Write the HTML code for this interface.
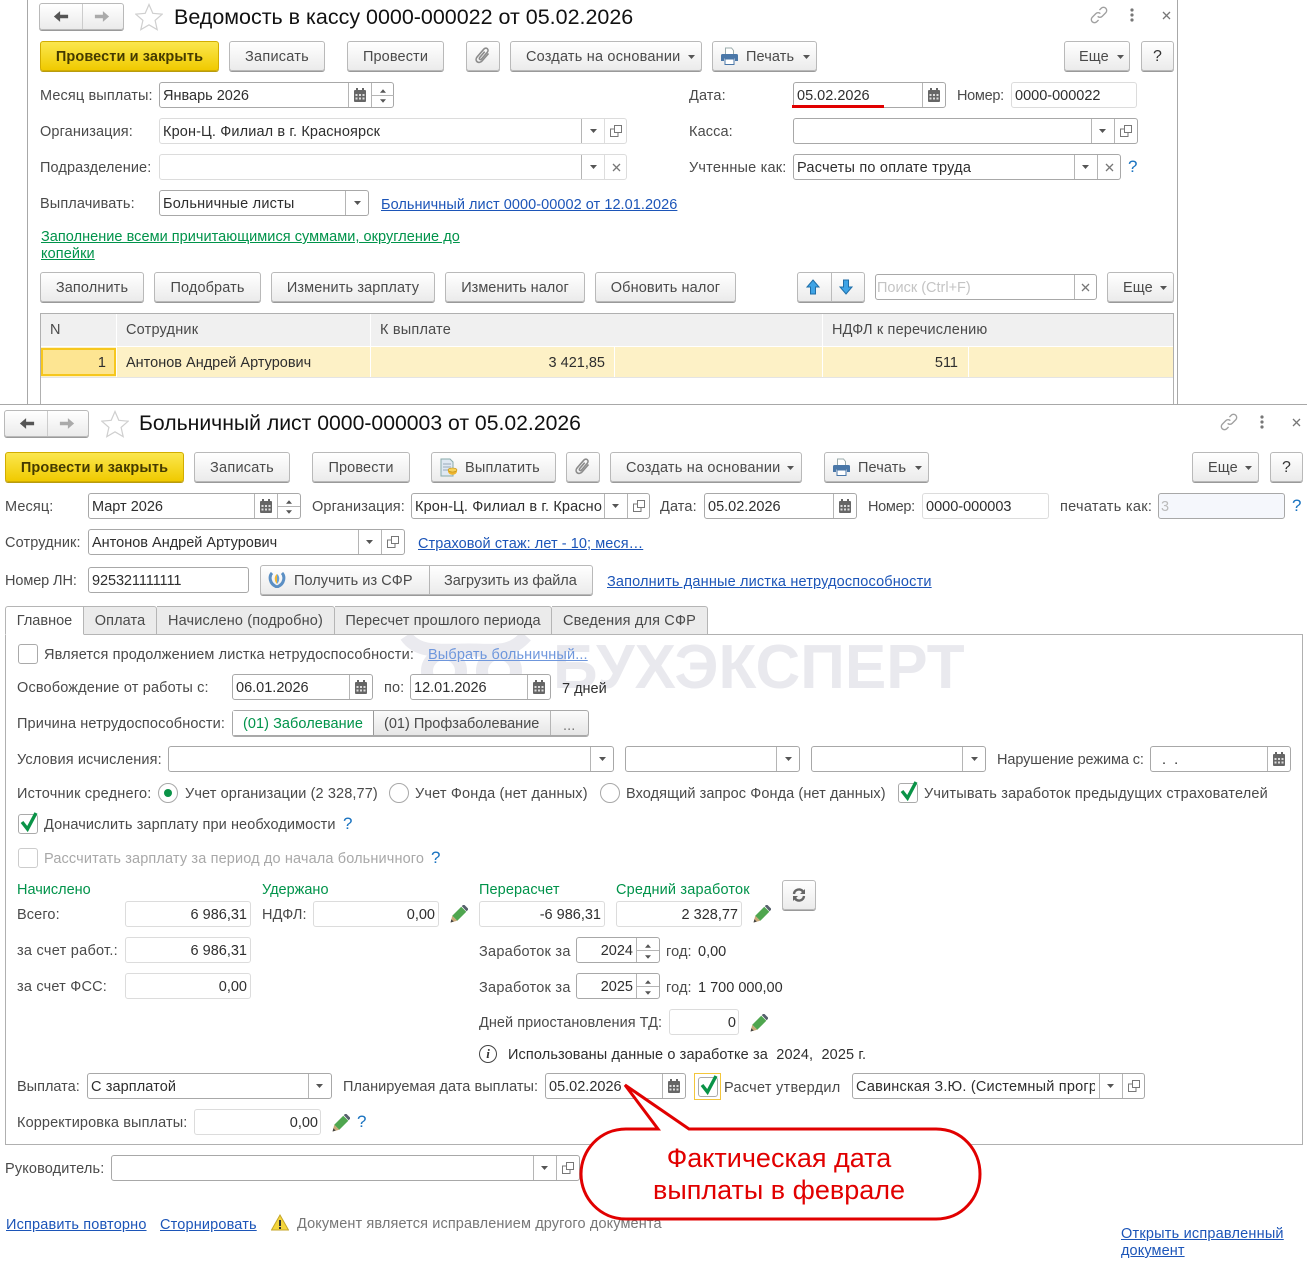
<!DOCTYPE html>
<html lang="ru"><head><meta charset="utf-8"><title>Больничный лист</title>
<style>
html,body{margin:0;padding:0;background:#fff}
#p{position:relative;width:1307px;height:1265px;overflow:hidden;background:#fff;font:14.5px/20px "Liberation Sans",Arial,sans-serif;color:#3c3c3c}
#p div,#p svg,#p a{position:absolute;box-sizing:border-box}
.t{white-space:nowrap;color:#4a4a4a;height:20px;margin-top:1px;letter-spacing:.12px}
.v{white-space:nowrap;color:#2e2e2e;height:20px;overflow:hidden;margin-top:1px}
.g{white-space:nowrap;color:#00934a;height:20px;margin-top:1px}
a.l{white-space:nowrap;color:#1c55b8;text-decoration:underline;height:20px;margin-top:1px;letter-spacing:.1px}
.b{border:1px solid #b9b9b9;border-radius:3px;background:linear-gradient(#fff,#ebebeb);box-shadow:0 1px 0 #9a9a9a;text-align:center;color:#4a4a4a;line-height:30px;white-space:nowrap;letter-spacing:.12px}
.y{border:1px solid #d2ad00;border-radius:3px;background:linear-gradient(#fbe74e,#f0ca00);box-shadow:0 1px 0 #b89c10;text-align:center;color:#443a00;font-weight:bold;line-height:30px;white-space:nowrap;letter-spacing:.1px}
.f{border:1px solid #a8a8a8;border-radius:3px;background:#fff;height:26px}
.e{border:1px solid #dcdcdc;border-radius:3px;background:#fff;height:26px}
.s{width:1px;background:#b5b5b5}
.c{border:1px solid #aaa;border-radius:3px;background:#fff;width:20px;height:20px}
.h{color:#1a73c0;font-size:17px;white-space:nowrap;height:20px;margin-top:1px}
.r{border:1px solid #a8a8a8;border-radius:50%;background:#fff;width:20px;height:20px}
.tab{height:29px;border:1px solid #b5b5b5;border-left:0;border-radius:0 3px 0 0;background:#ebebeb;text-align:center;line-height:29px;color:#4a4a4a;white-space:nowrap}
</style></head><body><div id="p">
<svg width="0" height="0" style="left:0;top:0"><defs>
<symbol id="cal" viewBox="0 0 12 14"><path d="M2 0h2v2h4V0h2v2h1a1 1 0 0 1 1 1v10a1 1 0 0 1-1 1H1a1 1 0 0 1-1-1V3a1 1 0 0 1 1-1h1z" fill="#666"/><path d="M1.5 6h2v2h-2zM5 6h2v2H5zM8.500 6h2v2h-2zM1.500 9.500h2v2h-2zM5 9.500h2v2H5zM8.500 9.500h2v2h-2z" fill="#ddd"/></symbol>
<symbol id="dd" viewBox="0 0 7 4"><path d="M0 0h7L3.500 4z" fill="#555"/></symbol>
<symbol id="up" viewBox="0 0 7 4"><path d="M0 4h7L3.500 0z" fill="#555"/></symbol>
<symbol id="cp" viewBox="0 0 12 12"><path d="M4.500.5h7v7h-7z" fill="none" stroke="#777"/><path d="M4 4H.5v7.500H8V8" fill="none" stroke="#777"/></symbol>
<symbol id="x" viewBox="0 0 9 9"><path d="M1 1l7 7M8 1l-7 7" stroke="#777" stroke-width="1.300" fill="none"/></symbol>
<symbol id="pen" viewBox="0 0 16 16"><path d="M.5 15.500l1.500-6 4.500 4.500z" fill="#c8a878"/><path d="M2 9.500L10 1.500l4.500 4.500-8 8z" fill="#4fa64f"/><path d="M10.500 1l1-1a1 1 0 0 1 1.400 0l3 3a1 1 0 0 1 0 1.400l-1.200 1.100z" fill="#56606c"/><path d="M.5 15.500l.7-2.800 2.100 2.100z" fill="#444"/></symbol>
<symbol id="clip" viewBox="0 0 16 18"><path d="M13.500 6.500L7 14c-1.500 1.700-3.700 1.800-5 .6S.8 11.400 2.300 9.700l6.500-7.500c1-1.200 2.600-1.300 3.500-.5s1 2.300 0 3.500L6.500 12c-.5.600-1.300.7-1.800.3s-.5-1.200 0-1.800l5-5.800" fill="none" stroke="#8c8c8c" stroke-width="1.600"/></symbol>
<symbol id="prn" viewBox="0 0 17 18"><path d="M4.500 1h6l2 2.500V8h-8z" fill="#fff" stroke="#9aa" stroke-width="1"/><path d="M1.500 7h14a1.500 1.500 0 0 1 1.500 1.500V14h-3v-2.500H3V14H0V8.500A1.500 1.500 0 0 1 1.500 7z" fill="#4a77a8"/><path d="M4 12h9v5.500H4z" fill="#fff" stroke="#4a77a8"/></symbol>
<symbol id="star" viewBox="0 0 28 28"><path d="M14 1.500l3.800 8.800 9.400.9-7.100 6.200 2.100 9.300-8.200-4.900-8.200 4.900 2.100-9.300L.8 11.200l9.400-.9z" fill="#fff" stroke="#cfcfcf" stroke-width="1.200"/></symbol>
<symbol id="al" viewBox="0 0 18 14"><path d="M1 7L8 1v4h9v4H8v4z" fill="#555"/></symbol>
<symbol id="ar" viewBox="0 0 18 14"><path d="M17 7l-7-6v4H1v4h9v4z" fill="#aaa"/></symbol>
<symbol id="link" viewBox="0 0 20 20"><path d="M8.500 11.500a3.500 3.500 0 0 0 5 0l4-4a3.500 3.500 0 0 0-5-5l-2 2M11.500 8.500a3.500 3.500 0 0 0-5 0l-4 4a3.500 3.500 0 0 0 5 5l2-2" fill="none" stroke="#a0a0a0" stroke-width="1.500"/></symbol>
<symbol id="dots" viewBox="0 0 4 14"><circle cx="2" cy="2" r="1.600" fill="#777"/><circle cx="2" cy="7" r="1.600" fill="#777"/><circle cx="2" cy="12" r="1.600" fill="#777"/></symbol>
<symbol id="bu" viewBox="0 0 16 16"><path d="M8 1l6 7H10.500v7h-5V8H2z" fill="#3fa4e6" stroke="#1f6ea8"/></symbol>
<symbol id="bd" viewBox="0 0 16 16"><path d="M8 15l6-7H10.500V1h-5v7H2z" fill="#3fa4e6" stroke="#1f6ea8"/></symbol>
<symbol id="chk" viewBox="0 0 20 22"><path d="M3 11l5.500 7L17 2" fill="none" stroke="#0a9347" stroke-width="3.400"/></symbol>
</defs></svg>

<!-- top window -->
<div style="left:27px;top:0;width:1px;height:405px;background:#a8a8a8"></div>
<div style="left:1177px;top:0;width:1px;height:405px;background:#a8a8a8"></div>
<div class="b" style="left:39px;top:3px;width:85px;height:27px"></div><div class="s" style="left:82px;top:4px;height:25px;background:#ccc"></div>
<svg style="left:53px;top:10px" width="16" height="13"><use href="#al"/></svg><svg style="left:94px;top:10px" width="16" height="13"><use href="#ar"/></svg>
<svg style="left:135px;top:3px" width="28" height="28"><use href="#star"/></svg>
<div class="v" style="left:174px;top:1px;font-size:21.47px;line-height:30px;height:30px;color:#111">Ведомость в кассу 0000-000022 от 05.02.2026</div>
<svg style="left:1090px;top:6px" width="18" height="18"><use href="#link"/></svg><svg style="left:1130px;top:8px" width="4" height="14"><use href="#dots"/></svg><svg style="left:1162px;top:11px" width="9" height="9"><use href="#x"/></svg>

<div class="y" style="left:40px;top:41px;width:179px;height:30px">Провести и закрыть</div>
<div class="b" style="left:229px;top:41px;width:96px;height:30px;letter-spacing:.25px">Записать</div>
<div class="b" style="left:347px;top:41px;width:97px;height:30px">Провести</div>
<div class="b" style="left:466px;top:41px;width:34px;height:30px"></div><svg style="left:475px;top:47px" width="16" height="18"><use href="#clip"/></svg>
<div class="b" style="left:510px;top:41px;width:192px;height:30px;text-align:left;padding-left:15px;letter-spacing:.2px">Создать на основании</div><svg style="left:688px;top:55px" width="7" height="4"><use href="#dd"/></svg>
<div class="b" style="left:712px;top:41px;width:105px;height:30px;text-align:left;padding-left:33px">Печать</div><svg style="left:721px;top:47px" width="17" height="18"><use href="#prn"/></svg><svg style="left:803px;top:55px" width="7" height="4"><use href="#dd"/></svg>
<div class="b" style="left:1064px;top:41px;width:66px;height:30px;text-align:left;padding-left:14px">Еще</div><svg style="left:1117px;top:55px" width="7" height="4"><use href="#dd"/></svg>
<div class="b" style="left:1141px;top:41px;width:33px;height:30px;font-size:16px;color:#333">?</div>

<div class="t" style="left:40px;top:85px">Месяц выплаты:</div>
<div class="f" style="left:159px;top:82px;width:235px"></div><div class="s" style="left:348px;top:83px;height:24px"></div><div class="s" style="left:371px;top:83px;height:24px"></div><div class="s" style="left:372px;top:95px;height:1px;width:22px"></div>
<div class="v" style="left:163px;top:85px">Январь 2026</div>
<svg style="left:354px;top:88px" width="12" height="14"><use href="#cal"/></svg><svg style="left:380px;top:89px" width="6" height="4"><use href="#up"/></svg><svg style="left:380px;top:99px" width="6" height="4"><use href="#dd"/></svg>

<div class="t" style="left:689px;top:85px">Дата:</div>
<div class="f" style="left:793px;top:82px;width:153px"></div><div class="s" style="left:922px;top:83px;height:24px"></div>
<div class="v" style="left:797px;top:85px">05.02.2026</div><svg style="left:928px;top:88px" width="12" height="14"><use href="#cal"/></svg>
<div style="left:792px;top:105px;width:92px;height:3px;background:#e10000"></div>
<div class="t" style="left:957px;top:85px;letter-spacing:-.3px">Номер:</div>
<div class="e" style="left:1011px;top:82px;width:126px"></div><div class="v" style="left:1015px;top:85px">0000-000022</div>

<div class="t" style="left:40px;top:121px">Организация:</div>
<div class="e" style="left:159px;top:118px;width:468px"></div><div class="s" style="left:581px;top:119px;height:24px"></div><div class="s" style="left:604px;top:119px;height:24px;background:#ddd"></div>
<div class="v" style="left:163px;top:121px;letter-spacing:.13px">Крон-Ц. Филиал в г. Красноярск</div><svg style="left:590px;top:129px" width="7" height="4"><use href="#dd"/></svg><svg style="left:610px;top:125px" width="12" height="12"><use href="#cp"/></svg>
<div class="t" style="left:689px;top:121px">Касса:</div>
<div class="f" style="left:793px;top:118px;width:345px"></div><div class="s" style="left:1091px;top:119px;height:24px"></div><div class="s" style="left:1114px;top:119px;height:24px"></div>
<svg style="left:1099px;top:129px" width="7" height="4"><use href="#dd"/></svg><svg style="left:1120px;top:125px" width="12" height="12"><use href="#cp"/></svg>

<div class="t" style="left:40px;top:157px">Подразделение:</div>
<div class="e" style="left:159px;top:154px;width:468px"></div><div class="s" style="left:581px;top:155px;height:24px"></div><div class="s" style="left:604px;top:155px;height:24px;background:#ddd"></div>
<svg style="left:590px;top:165px" width="7" height="4"><use href="#dd"/></svg><svg style="left:612px;top:163px" width="9" height="9"><use href="#x"/></svg>
<div class="t" style="left:689px;top:157px;letter-spacing:.2px">Учтенные как:</div>
<div class="f" style="left:793px;top:154px;width:328px"></div><div class="s" style="left:1074px;top:155px;height:24px"></div><div class="s" style="left:1097px;top:155px;height:24px"></div>
<div class="v" style="left:797px;top:157px;letter-spacing:.22px">Расчеты по оплате труда</div><svg style="left:1082px;top:165px" width="7" height="4"><use href="#dd"/></svg><svg style="left:1105px;top:163px" width="9" height="9"><use href="#x"/></svg>
<div class="h" style="left:1128px;top:156px">?</div>

<div class="t" style="left:40px;top:193px">Выплачивать:</div>
<div class="f" style="left:159px;top:190px;width:210px"></div><div class="s" style="left:345px;top:191px;height:24px"></div>
<div class="v" style="left:163px;top:193px;letter-spacing:.2px">Больничные листы</div><svg style="left:354px;top:201px" width="7" height="4"><use href="#dd"/></svg>
<a class="l" style="left:381px;top:194px;letter-spacing:.05px">Больничный лист 0000-00002 от 12.01.2026</a>
<a class="l" style="left:41px;top:226px;color:#00934a;letter-spacing:.04px">Заполнение всеми причитающимися суммами, округление до</a>
<a class="l" style="left:41px;top:243px;color:#00934a">копейки</a>

<div class="b" style="left:40px;top:272px;width:104px;height:30px">Заполнить</div>
<div class="b" style="left:154px;top:272px;width:107px;height:30px">Подобрать</div>
<div class="b" style="left:271px;top:272px;width:164px;height:30px">Изменить зарплату</div>
<div class="b" style="left:445px;top:272px;width:140px;height:30px;letter-spacing:0">Изменить налог</div>
<div class="b" style="left:595px;top:272px;width:141px;height:30px">Обновить налог</div>
<div class="b" style="left:797px;top:272px;width:68px;height:30px"></div><div class="s" style="left:831px;top:273px;height:28px;background:#bbb"></div>
<svg style="left:805px;top:279px" width="16" height="16"><use href="#bu"/></svg><svg style="left:838px;top:279px" width="16" height="16"><use href="#bd"/></svg>
<div class="f" style="left:875px;top:274px;width:222px"></div><div class="s" style="left:1074px;top:275px;height:24px"></div>
<div class="v" style="left:877px;top:277px;color:#c4c4c4">Поиск (Ctrl+F)</div><svg style="left:1081px;top:283px" width="9" height="9"><use href="#x"/></svg>
<div class="b" style="left:1107px;top:272px;width:67px;height:30px;text-align:left;padding-left:15px">Еще</div><svg style="left:1160px;top:286px" width="7" height="4"><use href="#dd"/></svg>

<div style="left:40px;top:313px;width:1134px;height:92px;border:1px solid #b0b0b0;border-bottom:0;background:#fff"></div>
<div style="left:41px;top:314px;width:1132px;height:32px;background:#f0f0f0"></div>
<div style="left:41px;top:347px;width:1132px;height:30px;background:#fdf1c6"></div>
<div style="left:41px;top:377px;width:1132px;height:1px;background:#e4e4e4"></div>
<div style="left:116px;top:314px;width:1px;height:63px;background:#fff"></div>
<div style="left:370px;top:314px;width:1px;height:63px;background:#fff"></div>
<div style="left:822px;top:314px;width:1px;height:63px;background:#fff"></div>
<div style="left:614px;top:347px;width:1px;height:30px;background:#fff"></div>
<div style="left:968px;top:347px;width:1px;height:30px;background:#fff"></div>
<div style="left:41px;top:348px;width:75px;height:28px;background:#fde592;border:2px solid #f6c71e"></div>
<div class="t" style="left:50px;top:319px">N</div><div class="t" style="left:126px;top:319px;letter-spacing:.2px">Сотрудник</div><div class="t" style="left:380px;top:319px;letter-spacing:.2px">К выплате</div><div class="t" style="left:832px;top:319px;letter-spacing:.16px">НДФЛ к перечислению</div>
<div class="v" style="right:1201px;top:352px">1</div><div class="v" style="left:126px;top:352px">Антонов Андрей Артурович</div><div class="v" style="right:702px;top:352px">3 421,85</div><div class="v" style="right:349px;top:352px">511</div>

<!-- bottom window -->
<div style="left:0;top:404px;width:1307px;height:861px;background:#fff;border-top:1px solid #a8a8a8"></div>

<!-- watermark -->
<svg style="left:398px;top:628px" width="150" height="72" viewBox="0 0 150 72"><path d="M8 8C20 26 44 22 71 22S112 26 128 8" fill="none" stroke="#eaeaef" stroke-width="13"/><circle cx="46" cy="43" r="17" fill="none" stroke="#eaeaef" stroke-width="12"/><circle cx="101" cy="43" r="17" fill="none" stroke="#eaeaef" stroke-width="12"/></svg>
<div style="left:553px;top:633px;font:bold 62px/70px 'Liberation Sans',Arial,sans-serif;color:#e9e9ee;white-space:nowrap">БУХЭКСПЕРТ</div>

<div class="b" style="left:4px;top:410px;width:85px;height:27px"></div><div class="s" style="left:47px;top:411px;height:25px;background:#ccc"></div>
<svg style="left:19px;top:417px" width="16" height="13"><use href="#al"/></svg><svg style="left:59px;top:417px" width="16" height="13"><use href="#ar"/></svg>
<svg style="left:101px;top:410px" width="28" height="28"><use href="#star"/></svg>
<div class="v" style="left:139px;top:408px;font-size:21.2px;line-height:30px;height:30px;color:#111">Больничный лист 0000-000003 от 05.02.2026</div>
<svg style="left:1220px;top:413px" width="18" height="18"><use href="#link"/></svg><svg style="left:1260px;top:415px" width="4" height="14"><use href="#dots"/></svg><svg style="left:1292px;top:418px" width="9" height="9"><use href="#x"/></svg>

<div class="y" style="left:5px;top:452px;width:179px;height:30px">Провести и закрыть</div>
<div class="b" style="left:194px;top:452px;width:96px;height:30px;letter-spacing:.25px">Записать</div>
<div class="b" style="left:312px;top:452px;width:98px;height:30px">Провести</div>
<div class="b" style="left:431px;top:452px;width:125px;height:30px;text-align:left;padding-left:33px;letter-spacing:.2px">Выплатить</div>
<svg style="left:439px;top:458px" width="20" height="20" viewBox="0 0 20 20"><path d="M2 1h9l3 3v14H2z" fill="#dfe8f2" stroke="#8aa"/><path d="M4 6h8M4 9h8M4 12h5" stroke="#9ab"/><path d="M9 13c0 5 9 5 9 0v-1H9z" fill="#eeb52e"/><ellipse cx="13.500" cy="12" rx="4.500" ry="2" fill="#f7d25a" stroke="#c08a10" stroke-width=".6"/></svg>
<div class="b" style="left:566px;top:452px;width:34px;height:30px"></div><svg style="left:575px;top:458px" width="16" height="18"><use href="#clip"/></svg>
<div class="b" style="left:610px;top:452px;width:192px;height:30px;text-align:left;padding-left:15px;letter-spacing:.2px">Создать на основании</div><svg style="left:787px;top:466px" width="7" height="4"><use href="#dd"/></svg>
<div class="b" style="left:824px;top:452px;width:105px;height:30px;text-align:left;padding-left:33px">Печать</div><svg style="left:833px;top:458px" width="17" height="18"><use href="#prn"/></svg><svg style="left:915px;top:466px" width="7" height="4"><use href="#dd"/></svg>
<div class="b" style="left:1192px;top:452px;width:67px;height:30px;text-align:left;padding-left:15px">Еще</div><svg style="left:1245px;top:466px" width="7" height="4"><use href="#dd"/></svg>
<div class="b" style="left:1270px;top:452px;width:33px;height:30px;font-size:16px;color:#333">?</div>

<div class="t" style="left:5px;top:496px">Месяц:</div>
<div class="f" style="left:88px;top:493px;width:213px"></div><div class="s" style="left:254px;top:494px;height:24px"></div><div class="s" style="left:277px;top:494px;height:24px"></div><div class="s" style="left:278px;top:506px;height:1px;width:22px"></div>
<div class="v" style="left:92px;top:496px">Март 2026</div><svg style="left:260px;top:499px" width="12" height="14"><use href="#cal"/></svg><svg style="left:286px;top:500px" width="6" height="4"><use href="#up"/></svg><svg style="left:286px;top:510px" width="6" height="4"><use href="#dd"/></svg>
<div class="t" style="left:312px;top:496px">Организация:</div>
<div class="f" style="left:411px;top:493px;width:239px"></div><div class="s" style="left:604px;top:494px;height:24px"></div><div class="s" style="left:627px;top:494px;height:24px"></div>
<div class="v" style="left:415px;top:496px;width:187px;letter-spacing:.13px">Крон-Ц. Филиал в г. Красно</div><svg style="left:612px;top:504px" width="7" height="4"><use href="#dd"/></svg><svg style="left:633px;top:500px" width="12" height="12"><use href="#cp"/></svg>
<div class="t" style="left:660px;top:496px">Дата:</div>
<div class="f" style="left:704px;top:493px;width:153px"></div><div class="s" style="left:833px;top:494px;height:24px"></div>
<div class="v" style="left:708px;top:496px">05.02.2026</div><svg style="left:839px;top:499px" width="12" height="14"><use href="#cal"/></svg>
<div class="t" style="left:868px;top:496px;letter-spacing:-.3px">Номер:</div>
<div class="e" style="left:922px;top:493px;width:127px"></div><div class="v" style="left:926px;top:496px">0000-000003</div>
<div class="t" style="left:1060px;top:496px;letter-spacing:.3px">печатать как:</div>
<div class="f" style="left:1158px;top:493px;width:127px;background:#f5f7fc"></div><div class="v" style="left:1161px;top:496px;color:#bbb">3</div>
<div class="h" style="left:1292px;top:495px">?</div>

<div class="t" style="left:5px;top:532px">Сотрудник:</div>
<div class="f" style="left:88px;top:529px;width:317px"></div><div class="s" style="left:358px;top:530px;height:24px"></div><div class="s" style="left:381px;top:530px;height:24px"></div>
<div class="v" style="left:92px;top:532px">Антонов Андрей Артурович</div><svg style="left:366px;top:540px" width="7" height="4"><use href="#dd"/></svg><svg style="left:387px;top:536px" width="12" height="12"><use href="#cp"/></svg>
<a class="l" style="left:418px;top:533px;letter-spacing:.07px">Страховой стаж: лет - 10; меся…</a>

<div class="t" style="left:5px;top:570px;letter-spacing:-.1px">Номер ЛН:</div>
<div class="f" style="left:88px;top:567px;width:161px"></div><div class="v" style="left:92px;top:570px;letter-spacing:-.08px">925321111111</div>
<div class="b" style="left:260px;top:565px;width:333px;height:30px"></div><div class="s" style="left:429px;top:566px;height:28px"></div>
<svg style="left:268px;top:572px" width="18" height="16" viewBox="0 0 18 16"><path d="M4 1C1 4 1 12 9 15c8-3 8-11 5-14" fill="none" stroke="#5b8fc4" stroke-width="3"/><path d="M9 2c-3 2-3 7 0 10z" fill="#f2b632"/><path d="M9 2c3 2 3 7 0 10z" fill="#6aa0d4"/></svg>
<div class="t" style="left:294px;top:570px;letter-spacing:.06px">Получить из СФР</div><div class="t" style="left:444px;top:570px;letter-spacing:-.05px">Загрузить из файла</div>
<a class="l" style="left:607px;top:571px;letter-spacing:.16px">Заполнить данные листка нетрудоспособности</a>

<!-- tabs -->
<div style="left:5px;top:634px;width:1298px;height:511px;border:1px solid #b0b0b0"></div>
<div class="tab" style="left:5px;top:606px;width:79px;background:#fff;border-left:1px solid #b5b5b5;border-bottom:1px solid #fff;border-radius:3px 0 0 0">Главное</div>
<div class="tab" style="left:84px;top:606px;width:73px;letter-spacing:.1px">Оплата</div>
<div class="tab" style="left:157px;top:606px;width:178px;letter-spacing:.15px">Начислено (подробно)</div>
<div class="tab" style="left:335px;top:606px;width:217px;letter-spacing:.08px">Пересчет прошлого периода</div>
<div class="tab" style="left:552px;top:606px;width:156px;letter-spacing:.17px">Сведения для СФР</div>

<div class="c" style="left:18px;top:644px"></div><div class="t" style="left:44px;top:644px;letter-spacing:.14px">Является продолжением листка нетрудоспособности:</div>
<a class="l" style="left:428px;top:644px;color:#6f97dc;letter-spacing:.14px">Выбрать больничный...</a>

<div class="t" style="left:17px;top:677px;letter-spacing:.16px">Освобождение от работы с:</div>
<div class="f" style="left:232px;top:674px;width:141px"></div><div class="s" style="left:349px;top:675px;height:24px"></div>
<div class="v" style="left:236px;top:677px">06.01.2026</div><svg style="left:355px;top:680px" width="12" height="14"><use href="#cal"/></svg>
<div class="t" style="left:384px;top:677px">по:</div>
<div class="f" style="left:410px;top:674px;width:141px"></div><div class="s" style="left:527px;top:675px;height:24px"></div>
<div class="v" style="left:414px;top:677px">12.01.2026</div><svg style="left:533px;top:680px" width="12" height="14"><use href="#cal"/></svg>
<div class="v" style="left:562px;top:678px">7 дней</div>

<div class="t" style="left:17px;top:713px">Причина нетрудоспособности:</div>
<div class="f" style="left:232px;top:710px;width:357px;background:linear-gradient(#fbfbfb,#e6e6e6);box-shadow:0 1px 0 #aaa"></div>
<div style="left:233px;top:711px;width:141px;height:24px;background:#fff;border-right:1px solid #999"></div><div class="s" style="left:550px;top:711px;height:24px"></div>
<div class="g" style="left:243px;top:713px;letter-spacing:.06px">(01) Заболевание</div><div class="t" style="left:384px;top:713px;letter-spacing:0">(01) Профзаболевание</div><div class="t" style="left:563px;top:715px;color:#777">...</div>

<div class="t" style="left:17px;top:749px">Условия исчисления:</div>
<div class="f" style="left:168px;top:746px;width:446px"></div><div class="s" style="left:590px;top:747px;height:24px"></div><svg style="left:599px;top:757px" width="7" height="4"><use href="#dd"/></svg>
<div class="f" style="left:625px;top:746px;width:175px"></div><div class="s" style="left:776px;top:747px;height:24px"></div><svg style="left:785px;top:757px" width="7" height="4"><use href="#dd"/></svg>
<div class="f" style="left:811px;top:746px;width:175px"></div><div class="s" style="left:962px;top:747px;height:24px"></div><svg style="left:971px;top:757px" width="7" height="4"><use href="#dd"/></svg>
<div class="t" style="left:997px;top:749px;letter-spacing:-.1px">Нарушение режима с:</div>
<div class="f" style="left:1150px;top:746px;width:141px"></div><div class="s" style="left:1267px;top:747px;height:24px"></div>
<div class="v" style="left:1162px;top:749px">.&nbsp;&nbsp;.</div><svg style="left:1273px;top:752px" width="12" height="14"><use href="#cal"/></svg>

<div class="t" style="left:17px;top:783px;letter-spacing:.22px">Источник среднего:</div>
<div class="r" style="left:158px;top:783px"></div><div style="left:164px;top:789px;width:8px;height:8px;border-radius:50%;background:#0a9347"></div>
<div class="t" style="left:185px;top:783px">Учет организации (2 328,77)</div>
<div class="r" style="left:389px;top:783px"></div><div class="t" style="left:415px;top:783px;letter-spacing:.17px">Учет Фонда (нет данных)</div>
<div class="r" style="left:600px;top:783px"></div><div class="t" style="left:626px;top:783px;letter-spacing:.09px">Входящий запрос Фонда (нет данных)</div>
<div class="c" style="left:898px;top:783px"></div><svg style="left:899px;top:780px" width="20" height="22"><use href="#chk"/></svg>
<div class="t" style="left:924px;top:783px;letter-spacing:.18px">Учитывать заработок предыдущих страхователей</div>

<div class="c" style="left:18px;top:814px"></div><svg style="left:19px;top:811px" width="20" height="22"><use href="#chk"/></svg>
<div class="t" style="left:44px;top:814px;letter-spacing:.1px">Доначислить зарплату при необходимости</div><div class="h" style="left:343px;top:813px">?</div>
<div class="c" style="left:18px;top:848px;border-color:#ccc"></div><div class="t" style="left:44px;top:848px;color:#a8a8a8;letter-spacing:.14px">Рассчитать зарплату за период до начала больничного</div><div class="h" style="left:431px;top:847px">?</div>

<div class="g" style="left:17px;top:879px">Начислено</div><div class="g" style="left:262px;top:879px">Удержано</div><div class="g" style="left:479px;top:879px;letter-spacing:.1px">Перерасчет</div><div class="g" style="left:616px;top:879px;letter-spacing:.18px">Средний заработок</div>
<div class="b" style="left:782px;top:880px;width:34px;height:30px"></div>
<svg style="left:792px;top:888px" width="14" height="14" viewBox="0 0 14 14"><path d="M2 6a5 5 0 0 1 9-2.500M12 8a5 5 0 0 1-9 2.500" fill="none" stroke="#666" stroke-width="2.400"/><path d="M13 1v5H8zM1 13V8h5z" fill="#666"/></svg>

<div class="t" style="left:17px;top:904px">Всего:</div>
<div class="e" style="left:125px;top:901px;width:126px"></div><div class="v" style="right:1060px;top:904px">6 986,31</div>
<div class="t" style="left:262px;top:904px">НДФЛ:</div>
<div class="e" style="left:313px;top:901px;width:126px"></div><div class="v" style="right:872px;top:904px">0,00</div>
<svg style="left:450px;top:905px" width="18" height="18"><use href="#pen"/></svg>
<div class="e" style="left:479px;top:901px;width:126px"></div><div class="v" style="right:706px;top:904px">-6 986,31</div>
<div class="e" style="left:616px;top:901px;width:126px"></div><div class="v" style="right:569px;top:904px">2 328,77</div>
<svg style="left:753px;top:905px" width="18" height="18"><use href="#pen"/></svg>

<div class="t" style="left:17px;top:940px;letter-spacing:.27px">за счет работ.:</div>
<div class="e" style="left:125px;top:937px;width:126px"></div><div class="v" style="right:1060px;top:940px">6 986,31</div>
<div class="t" style="left:479px;top:941px;letter-spacing:.25px">Заработок за</div>
<div class="f" style="left:576px;top:937px;width:84px"></div><div class="s" style="left:636px;top:938px;height:24px"></div><div class="s" style="left:637px;top:950px;height:1px;width:22px"></div>
<div class="v" style="right:674px;top:940px">2024</div><svg style="left:645px;top:944px" width="6" height="4"><use href="#up"/></svg><svg style="left:645px;top:955px" width="6" height="4"><use href="#dd"/></svg>
<div class="t" style="left:666px;top:941px">год:</div><div class="v" style="left:698px;top:941px">0,00</div>

<div class="t" style="left:17px;top:976px;letter-spacing:.2px">за счет ФСС:</div>
<div class="e" style="left:125px;top:973px;width:126px"></div><div class="v" style="right:1060px;top:976px">0,00</div>
<div class="t" style="left:479px;top:977px;letter-spacing:.25px">Заработок за</div>
<div class="f" style="left:576px;top:973px;width:84px"></div><div class="s" style="left:636px;top:974px;height:24px"></div><div class="s" style="left:637px;top:986px;height:1px;width:22px"></div>
<div class="v" style="right:674px;top:976px">2025</div><svg style="left:645px;top:980px" width="6" height="4"><use href="#up"/></svg><svg style="left:645px;top:991px" width="6" height="4"><use href="#dd"/></svg>
<div class="t" style="left:666px;top:977px">год:</div><div class="v" style="left:698px;top:977px">1 700 000,00</div>

<div class="t" style="left:479px;top:1012px;letter-spacing:.04px">Дней приостановления ТД:</div>
<div class="e" style="left:669px;top:1009px;width:70px"></div><div class="v" style="right:571px;top:1012px">0</div>
<svg style="left:750px;top:1014px" width="18" height="18"><use href="#pen"/></svg>

<div style="left:479px;top:1045px;width:18px;height:18px;border:1.500px solid #444;border-radius:50%;text-align:center;font:italic bold 13px/15px 'Liberation Serif',serif;color:#333">i</div>
<div class="v" style="left:508px;top:1044px;letter-spacing:.12px">Использованы данные о заработке за &nbsp;2024, &nbsp;2025 г.</div>

<div class="t" style="left:17px;top:1076px;letter-spacing:0">Выплата:</div>
<div class="f" style="left:87px;top:1073px;width:245px"></div><div class="s" style="left:308px;top:1074px;height:24px"></div>
<div class="v" style="left:91px;top:1076px;letter-spacing:.1px">С зарплатой</div><svg style="left:316px;top:1084px" width="7" height="4"><use href="#dd"/></svg>
<div class="t" style="left:343px;top:1076px;letter-spacing:.04px">Планируемая дата выплаты:</div>
<div class="f" style="left:545px;top:1073px;width:141px"></div><div class="s" style="left:662px;top:1074px;height:24px"></div>
<div class="v" style="left:549px;top:1076px">05.02.2026</div><svg style="left:668px;top:1079px" width="12" height="14"><use href="#cal"/></svg>
<div style="left:694px;top:1073px;width:27px;height:27px;border:1px solid #f3c63c"></div>
<div class="c" style="left:698px;top:1077px"></div><svg style="left:699px;top:1074px" width="20" height="22"><use href="#chk"/></svg>
<div class="t" style="left:724px;top:1077px;letter-spacing:.27px">Расчет утвердил</div>
<div class="f" style="left:852px;top:1073px;width:293px"></div><div class="s" style="left:1099px;top:1074px;height:24px"></div><div class="s" style="left:1122px;top:1074px;height:24px"></div>
<div class="v" style="left:856px;top:1076px;width:239px;letter-spacing:.2px">Савинская З.Ю. (Системный прогр</div><svg style="left:1107px;top:1084px" width="7" height="4"><use href="#dd"/></svg><svg style="left:1128px;top:1080px" width="12" height="12"><use href="#cp"/></svg>

<div class="t" style="left:17px;top:1112px">Корректировка выплаты:</div>
<div class="e" style="left:194px;top:1109px;width:127px"></div><div class="v" style="right:989px;top:1112px">0,00</div>
<svg style="left:332px;top:1114px" width="18" height="18"><use href="#pen"/></svg><div class="h" style="left:357px;top:1111px">?</div>

<div class="t" style="left:5px;top:1158px;letter-spacing:.15px">Руководитель:</div>
<div class="f" style="left:111px;top:1155px;width:469px"></div><div class="s" style="left:533px;top:1156px;height:24px"></div><div class="s" style="left:556px;top:1156px;height:24px"></div>
<svg style="left:541px;top:1166px" width="7" height="4"><use href="#dd"/></svg><svg style="left:562px;top:1162px" width="12" height="12"><use href="#cp"/></svg>

<a class="l" style="left:6px;top:1214px;letter-spacing:.16px">Исправить повторно</a><a class="l" style="left:160px;top:1214px;letter-spacing:.16px">Сторнировать</a>
<svg style="left:271px;top:1214px" width="18" height="17" viewBox="0 0 18 17"><path d="M9 1l8.500 15H.5z" fill="#f4d53c" stroke="#c4a62a"/><path d="M8 6h2v6H8zM8 13h2v2H8z" fill="#333"/></svg>
<div class="t" style="left:297px;top:1213px;color:#777">Документ является исправлением другого документа</div>
<a class="l" style="left:1121px;top:1223px;letter-spacing:.2px">Открыть исправленный</a><a class="l" style="left:1121px;top:1240px">документ</a>

<!-- callout -->
<svg style="left:570px;top:1075px" width="420" height="155" viewBox="570 1075 420 155"><path d="M625 1085L689 1129H936C962 1129 980 1150 980 1174S962 1219 936 1219H626C600 1219 581 1198 581 1174S600 1129 626 1129H658Z" fill="#fff" stroke="#e10000" stroke-width="3" stroke-linejoin="miter"/></svg>
<div style="left:581px;top:1142px;width:396px;text-align:center;font-size:27px;line-height:32px;color:#e10000;white-space:nowrap">Фактическая дата<br>выплаты в феврале</div>
</div></body></html>
